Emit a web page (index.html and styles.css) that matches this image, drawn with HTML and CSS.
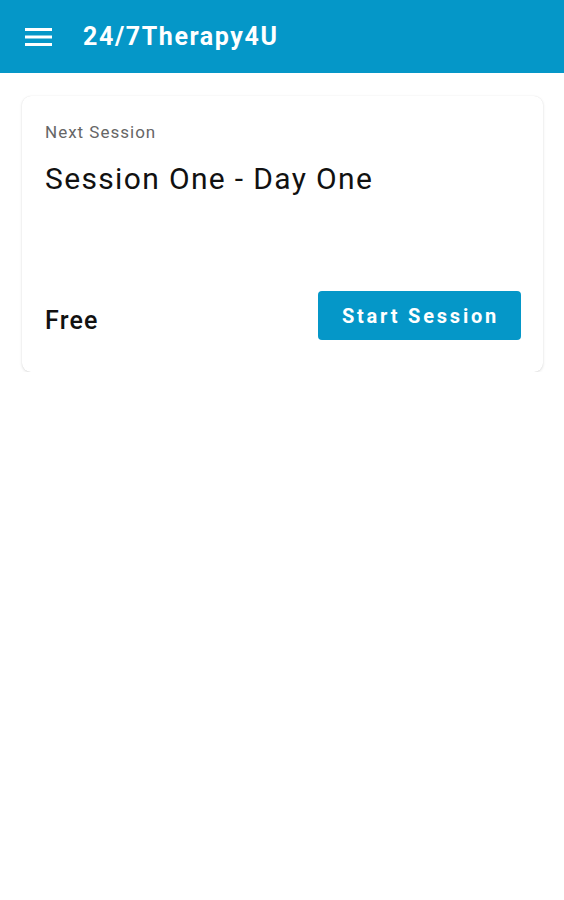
FILE: index.html
```html
<!DOCTYPE html>
<html>
<head>
<meta charset="utf-8">
<link rel="stylesheet" href="styles.css">
</head>
<body>
<header class="appbar">
  <svg class="menu" width="28" height="20" viewBox="0 0 28 20"><rect x="0" y="1" width="27" height="3" fill="#fff"/><rect x="0" y="8.5" width="27" height="3" fill="#fff"/><rect x="0" y="16" width="27" height="3" fill="#fff"/></svg>
  <span class="title">24/7Therapy4U</span>
</header>
<main class="content">
  <section class="card">
    <div class="label">Next Session</div>
    <div class="name">Session One - Day One</div>
    <div class="footer">
      <span class="price">Free</span>
      <button class="start">Start Session</button>
    </div>
  </section>
</main>
</body>
</html>
```
FILE: styles.css
```css
html, body { margin: 0; padding: 0; background: #fff; font-family: Roboto, "Noto Sans", sans-serif; }
.appbar { height: 73px; background: #0597c8; display: flex; align-items: center; padding-left: 25px; box-sizing: border-box; }
.menu { display: block; margin-right: 30px; }
.title { color: #fff; font-size: 25px; font-weight: 700; letter-spacing: 1.6px; }
.content { padding: 23px 21px 0 22px; }
.card { border-radius: 9px; box-shadow: 0 1px 3px rgba(0,0,0,0.13), 0 0 1px rgba(0,0,0,0.1); padding: 25px 22px 32px 23px; height: 276px; box-sizing: border-box; display: flex; flex-direction: column; }
.label { font-size: 17px; color: #666; line-height: 22px; letter-spacing: 1px; }
.name { font-size: 30px; color: #111; margin-top: 18px; line-height: 36px; letter-spacing: 1.35px; }
.footer { margin-top: auto; display: flex; justify-content: space-between; align-items: center; }
.price { font-size: 25px; font-weight: 500; color: #111; margin-top: 9px; letter-spacing: 1.2px; }
.start { background: #0597c8; color: #fff; border: none; border-radius: 4px; width: 203px; height: 49px; font-family: Roboto, sans-serif; font-size: 20px; font-weight: 700; letter-spacing: 2.8px; padding: 0 0 0 2px; }
```
